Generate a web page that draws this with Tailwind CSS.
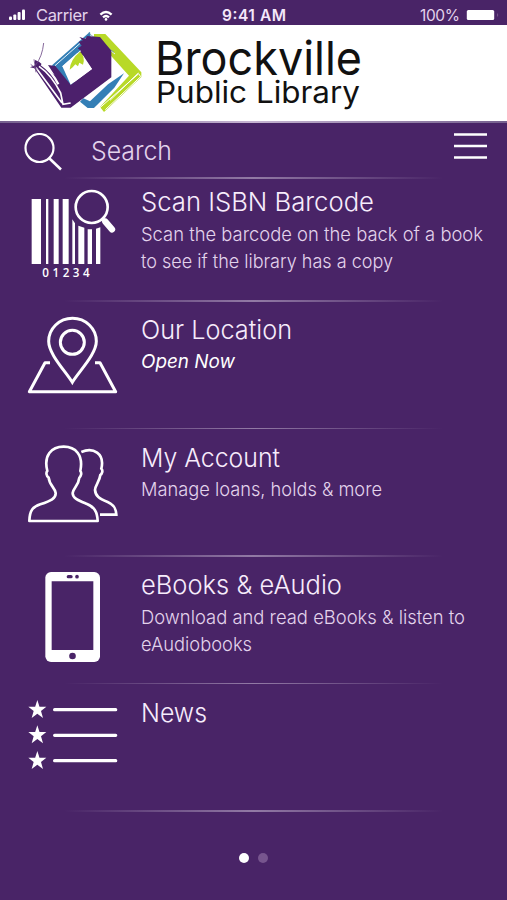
<!DOCTYPE html>
<html lang="en">
<head>
    <meta charset="UTF-8">
    <meta name="viewport" content="width=device-width, initial-scale=1.0">
    <title>Brockville Public Library</title>
    <script src="https://cdn.jsdelivr.net/npm/@tailwindcss/browser@4"></script>
</head>
<body class="bg-[#492467] text-[#f3e6fa] font-['Inter','Liberation_Sans',sans-serif] font-light">
    <div class="w-[507px] h-[900px] overflow-hidden flex flex-col">
        <!-- Status bar -->
        <div class="h-[25px] shrink-0 grid grid-cols-3 items-center pt-[5px] pl-2 pr-1.5 font-normal">
            <div class="flex items-center">
                <svg class="w-[18px] h-3" viewBox="0 0 18 12" fill="#fff">
                    <rect x="1" y="7.5" width="3" height="3.5" rx="1"/>
                    <rect x="5.3" y="5.5" width="3" height="5.5" rx="1"/>
                    <rect x="9.6" y="3" width="3" height="8" rx="1"/>
                    <rect x="14" y="0.5" width="3" height="10.5" rx="1"/>
                </svg>
                <svg class="ml-2.5 w-[54px] h-5" viewBox="0 0 54 20"><text x="0" y="16" font-size="16.5" textLength="52" fill="#e3d3ec">Carrier</text></svg>
                <svg class="ml-[9px] mt-0.5 w-[14px] h-3" viewBox="0 0 14 12" fill="none" stroke="#fff" stroke-width="2.4">
                    <path d="M1.4 4.6Q7 -.6 12.6 4.6"/>
                    <path d="M4 7.4Q7 4.8 10 7.4"/>
                    <circle cx="7" cy="9.4" r="1.3" fill="#fff" stroke="none"/>
                </svg>
            </div>
            <div class="flex justify-center">
                <svg class="w-16 h-5" viewBox="0 0 64 20"><text x="0" y="16" font-size="15.5" font-weight="600" textLength="64" fill="#f3e6fa">9:41 AM</text></svg>
            </div>
            <div class="flex items-center justify-end">
                <svg class="w-10 h-5" viewBox="0 0 40 20"><text x="0" y="16" font-size="15.5" textLength="40" fill="#e3d3ec">100%</text></svg>
                <svg class="ml-1.5 w-[35px] h-3" viewBox="0 0 35 12">
                    <rect x="0.8" y="1" width="27.4" height="10" rx="1.5" fill="#fff"/>
                    <path d="M31 4q2.5 2 0 4z" fill="#725087"/>
                </svg>
            </div>
        </div>

        <!-- Logo banner -->
        <div class="h-24 shrink-0 bg-white flex">
            <svg class="w-[130px] h-24 ml-5 shrink-0" viewBox="0 0 390 288">
                <path d="M222 27H256L364 142V156L252 261L240 246L327 152L222 36Z" fill="#b8d927"/>
                <path d="M240 248L356 146L362 155L256 254M270 226L355 144" fill="none" stroke="#fff" stroke-width="3"/>
                <path d="M210 20L96 121L145 188L166 176L127 124L213 48Z" fill="#347fb6"/>
                <path d="M204 34L105 122M220 36L285 87" stroke="#e9f4fb" stroke-width="3"/>
                <path d="M205 24L282 82" stroke="#5d93a5" stroke-width="2"/>
                <path d="M180 230L203 249H222L283 188L312 145L264 178L210 229L190 220Z" fill="#347fb6"/>
                <path d="M178 36L196 41L201 33L240 36L274 77V157L152 248H124L43 130L30 127L45 121L45 105L57 110L104 151L84 120L106 123L152 179L216 132L186 90L175 88L183 78L173 70L185 62L176 51L188 46Z" fill="#4c206c"/>
                <path d="M127 124L172 84L190 92L216 132L152 179Z" fill="#fff"/>
                <path d="M149 134Q151 103 180 80Q197 94 189 119L178 113L174 124L166 118L158 127Z" fill="#b8d927"/>
                <path d="M57 124Q94 149 122 204L129 238L152 234M48 128L126 234" fill="none" stroke="#fff" stroke-width="5"/>
                <path d="M64 118Q98 142 115 178" fill="none" stroke="#fff" stroke-width="7"/>
                <path d="M47 120Q67 94 71 54M32 118L52 134M42 103L48 142" fill="none" stroke="#6e4b87" stroke-width="2.5"/>
            </svg>
            <svg class="w-[215px] h-24 ml-1 overflow-visible" viewBox="154 25 215 96" fill="#111">
                <text x="155" y="74.500" font-size="46.500" textLength="207" lengthAdjust="spacingAndGlyphs" font-weight="400">Brockville</text>
                <text x="156" y="102.500" font-size="30" textLength="204" lengthAdjust="spacingAndGlyphs" font-weight="400">Public Library</text>
            </svg>
        </div>
        <div class="h-0.5 shrink-0 bg-linear-to-r from-[#76618f] via-[#c6b5d2] to-[#76618f]"></div>

        <!-- Search -->
        <div class="h-[54px] shrink-0 flex pl-6 pr-5">
            <svg class="w-10 h-10 mt-2.5" viewBox="0 0 40 40" fill="none" stroke="#fff" stroke-width="2.2">
                <circle cx="15.500" cy="15" r="14"/>
                <path d="M25.500 25.500L37 36.500" stroke-width="2.600"/>
            </svg>
            <svg class="w-[90px] h-10 ml-[27px] mt-1.5" viewBox="0 0 90 40"><text x="0" y="30.500" font-size="26" textLength="81" lengthAdjust="spacingAndGlyphs" fill="#e3d3ec">Search</text></svg>
            <svg class="w-[33px] h-[30px] ml-auto mt-2" viewBox="0 0 33 30" stroke="#fff" stroke-width="2.500">
                <path d="M0 3.500H33M0 15H33M0 26.500H33"/>
            </svg>
        </div>

        <!-- Scan ISBN -->
        <div class="h-[123px] shrink-0">
            <div class="h-[1.5px] mx-16 bg-linear-to-r from-transparent via-[#927aa5] to-transparent"></div>
            <div class="flex pl-5">
                <svg class="w-[110px] h-[105px] mt-[1.5px]" viewBox="0 0 330 315" fill="#fff">
                    <path d="M35 57H63V252H35zM78 57H85V252H78zM101 57H116V252H101zM128 57H146V252H128zM157 118L165 130V252H157zM175 137L193 143V252H175zM203 148H216V252H203zM228 146L241 142V252H228z"/>
                    <circle cx="215" cy="81" r="48" fill="none" stroke="#fff" stroke-width="8"/>
                    <path d="M247 115L258 126" stroke="#fff" stroke-width="10"/>
                    <path d="M256 125L276 148" stroke="#fff" stroke-width="19" stroke-linecap="round"/>
                    <text x="67" y="290" font-size="35" font-weight="600" textLength="142" font-family="Open Sans, Noto Sans, sans-serif">01234</text>
                </svg>
                <svg class="w-[366px] h-[105px] ml-[11px] shrink-0 overflow-visible" viewBox="141 180 366 105">
                    <text x="141" y="211.500" font-size="26" textLength="233" lengthAdjust="spacingAndGlyphs" fill="#f7ecfc">Scan ISBN Barcode</text>
                    <text x="141" y="241.500" font-size="19" textLength="342" lengthAdjust="spacingAndGlyphs" fill="#e3d3ec">Scan the barcode on the back of a book</text>
                    <text x="141" y="268.500" font-size="19" textLength="252" lengthAdjust="spacingAndGlyphs" fill="#e3d3ec">to see if the library has a copy</text>
                </svg>
            </div>
        </div>

        <!-- Location -->
        <div class="h-[127.5px] shrink-0">
            <div class="h-[1.5px] mx-16 bg-linear-to-r from-transparent via-[#927aa5] to-transparent"></div>
            <div class="flex pl-5 pt-[3.5px]">
                <svg class="w-[110px] h-[100px]" viewBox="0 0 330 300" fill="none" stroke="#fff" stroke-width="9">
                    <path d="M157 232C137 199 86 148 86 109A71 69 0 0 1 229 109C229 148 177 199 157 232Z"/>
                    <circle cx="157" cy="112" r="36"/>
                    <path d="M90 173H75L28 260H287L240 173H225" stroke-linejoin="round"/>
                </svg>
                <svg class="w-[366px] h-[100px] ml-[11px] shrink-0" viewBox="141 305 366 100">
                    <text x="141" y="338.500" font-size="26" textLength="151" lengthAdjust="spacingAndGlyphs" fill="#f7ecfc">Our Location</text>
                    <text x="141" y="368" font-size="19" font-style="italic" font-weight="400" textLength="94" lengthAdjust="spacingAndGlyphs" fill="#fff">Open Now</text>
                </svg>
            </div>
        </div>

        <!-- Account -->
        <div class="h-[127.5px] shrink-0">
            <div class="h-[1.5px] mx-16 bg-linear-to-r from-transparent via-[#927aa5] to-transparent"></div>
            <div class="flex pl-5 pt-1.5">
                <svg class="w-[110px] h-[100px]" viewBox="0 0 330 300" fill="none" stroke="#fff" stroke-width="8">
                    <path d="M28 258C29 224 40 215 61 208C93 197 108 190 107 174C105 158 88 151 86 128C78 122 78 112 82 108C70 62 94 35 131 35C166 35 191 59 181 108C186 114 183 124 178 128C176 151 160 158 158 174C157 190 177 197 201 207C222 216 232 229 233 258Z" stroke-linejoin="round"/>
                    <path d="M184 51C219 35 255 55 244 101C250 107 246 116 241 120C239 139 225 151 225 165C227 184 237 190 263 201C281 209 288 219 289 239H240"/>
                </svg>
                <svg class="w-[366px] h-[100px] ml-[11px] shrink-0" viewBox="141 435 366 100">
                    <text x="141" y="466.500" font-size="26" textLength="139" lengthAdjust="spacingAndGlyphs" fill="#f7ecfc">My Account</text>
                    <text x="141" y="496" font-size="19" textLength="241" lengthAdjust="spacingAndGlyphs" fill="#e3d3ec">Manage loans, holds &amp; more</text>
                </svg>
            </div>
        </div>

        <!-- eBooks -->
        <div class="h-[127.5px] shrink-0">
            <div class="h-[1.5px] mx-16 bg-linear-to-r from-transparent via-[#927aa5] to-transparent"></div>
            <div class="flex pl-5 pt-[3.5px]">
                <svg class="w-[110px] h-[110px]" viewBox="0 0 330 330">
                    <rect x="76" y="36" width="164" height="270" rx="17" fill="#fff"/>
                    <g fill="#492467">
                        <path d="M95 64H220V270H95z"/>
                        <rect x="140" y="45" width="18" height="10" rx="5"/>
                        <circle cx="171" cy="50" r="5.500"/>
                        <circle cx="157.500" cy="288" r="10"/>
                    </g>
                </svg>
                <svg class="w-[366px] h-[110px] ml-[11px] shrink-0" viewBox="141 560 366 110">
                    <text x="141" y="594" font-size="26" textLength="201" lengthAdjust="spacingAndGlyphs" fill="#f7ecfc">eBooks &amp; eAudio</text>
                    <text x="141" y="623.500" font-size="19" textLength="324" lengthAdjust="spacingAndGlyphs" fill="#e3d3ec">Download and read eBooks &amp; listen to</text>
                    <text x="141" y="650.500" font-size="19" textLength="111" lengthAdjust="spacingAndGlyphs" fill="#e3d3ec">eAudiobooks</text>
                </svg>
            </div>
        </div>

        <!-- News -->
        <div class="h-[127.5px] shrink-0">
            <div class="h-[1.5px] mx-16 bg-linear-to-r from-transparent via-[#927aa5] to-transparent"></div>
            <div class="flex pl-5 pt-1">
                <svg class="w-[110px] h-[100px]" viewBox="0 24 330 300" fill="#fff">
                    <defs><path id="star" d="M0 -29L6.500 -9H27L11 4L17 25L0 12L-17 25L-11 4L-27 -9H-6.500Z"/></defs>
                    <use href="#star" x="52" y="89"/>
                    <use href="#star" x="52" y="165"/>
                    <use href="#star" x="52" y="242"/>
                    <path d="M104 89H287M104 166H287M104 242H287" stroke="#fff" stroke-width="10" stroke-linecap="round"/>
                </svg>
                <svg class="w-[366px] h-[100px] ml-[11px] shrink-0" viewBox="141 688 366 100">
                    <text x="141" y="721.500" font-size="26" textLength="66" lengthAdjust="spacingAndGlyphs" fill="#f7ecfc">News</text>
                </svg>
            </div>
        </div>
        <div class="h-[1.5px] shrink-0 mx-16 bg-linear-to-r from-transparent via-[#927aa5] to-transparent"></div>

        <!-- Page dots -->
        <div class="flex justify-center gap-[9.5px] mt-[41.5px]">
            <div class="size-[10px] rounded-full bg-white"></div>
            <div class="size-[10px] rounded-full bg-[#77558e]"></div>
        </div>
    </div>
</body>
</html>
